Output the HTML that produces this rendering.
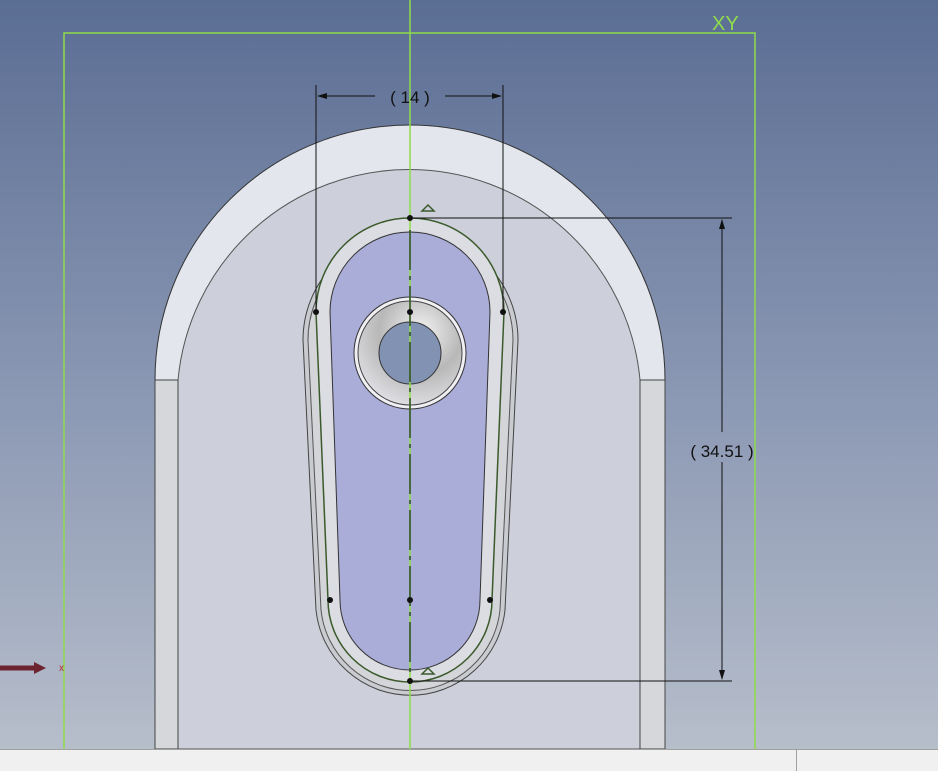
<!DOCTYPE html>
<html><head><style>body{margin:0;width:938px;height:771px;overflow:hidden}</style></head><body>
<svg width="938" height="771" xmlns="http://www.w3.org/2000/svg" font-family="Liberation Sans, sans-serif">
<defs>
<linearGradient id="bg" x1="0" y1="0" x2="0" y2="1"><stop offset="0" stop-color="#5a6d93"/><stop offset="0.5" stop-color="#8a97b3"/><stop offset="1" stop-color="#b9c0cc"/></linearGradient>
<radialGradient id="cb" cx="0.6" cy="0.3" r="0.8"><stop offset="0" stop-color="#f4f4f4"/><stop offset="0.5" stop-color="#b8b8b8"/><stop offset="1" stop-color="#e8e8ee"/></radialGradient>
</defs>
<rect width="938" height="771" fill="url(#bg)"/>
<!-- part -->
<path d="M155 749 V380 A255 255 0 0 1 665 380 V749 Z" fill="#e4e6ee" stroke="#333" stroke-width="1"/>
<path d="M178 749 V380 A232 232 0 0 1 640 380 V749 Z" fill="#cdd0da" stroke="#555" stroke-width="1"/>
<rect x="155" y="380" width="23" height="369" fill="#d6d7da" stroke="#444"/>
<rect x="640" y="380" width="25" height="369" fill="#d6d7da" stroke="#444"/>
<!-- slot outer -->
<path d="M303 340 A107 107 0 0 1 518 340 L505 610 A95 95 0 0 1 316 610 Z" fill="#c9cbd0" stroke="#444"/>
<path d="M308 340 A102 102 0 0 1 513 340 L500 610 A90 90 0 0 1 321 610 Z" fill="#d4d5d8" stroke="#555"/>
<path d="M316 312 A94 94 0 0 1 504 312 L492 600 A82 82 0 0 1 328 600 Z" fill="#dcdde2" stroke="#3b5a2c" stroke-width="1.5"/>
<path d="M330 312 A80 80 0 0 1 490 312 L480 600 A70 70 0 0 1 340 600 Z" fill="#a9add7" stroke="#333"/>
<!-- counterbore -->
<circle cx="410" cy="353" r="56" fill="#f0f0f4" stroke="#333"/>
<circle cx="410" cy="353" r="52" fill="url(#cb)" stroke="#444"/>
<circle cx="410" cy="353" r="31" fill="#8292b2" stroke="#333"/>
<!-- green frame -->
<g stroke="#8fdc4a" stroke-width="1.5" fill="none">
<path d="M64 749 V33 H755 V749"/>
<path d="M410 0 V749"/>
</g>
<path d="M410 230 V680" stroke="#2d4a22" stroke-width="1.5" stroke-dasharray="40 6 4 6"/>
<text x="712" y="30" font-size="20" fill="#8fdc4a">XY</text>
<!-- dimensions -->
<g stroke="#111" stroke-width="1" fill="none">
<path d="M316 85 V312 M503 85 V312"/>
<path d="M318 96 H375 M445 96 H501"/>
<path d="M410 218 H732 M410 681 H732"/>
<path d="M722 220 V432 M722 462 V679"/>
</g>
<g fill="#111">
<path d="M317 96 l10 -3 v6z M502 96 l-10 -3 v6z M722 219 l-3 10 h6z M722 680 l-3 -10 h6z"/>
<circle cx="410" cy="218" r="3"/><circle cx="410" cy="681" r="3"/>
<circle cx="316" cy="312" r="3"/><circle cx="410" cy="312" r="3"/><circle cx="503" cy="312" r="3"/>
<circle cx="330" cy="600" r="3"/><circle cx="410" cy="600" r="3"/><circle cx="490" cy="600" r="3"/>
</g>
<text x="410" y="103" font-size="17" text-anchor="middle" fill="#111">( 14 )</text>
<text x="722" y="457" font-size="17" text-anchor="middle" fill="#111">( 34.51 )</text>
<path d="M422 211 l6 -6 l6 6 z M422 674 l6 -6 l6 6 z" fill="none" stroke="#3b5a2c" stroke-width="1.5"/>
<!-- axis arrow -->
<path d="M0 668 H36" stroke="#6e2430" stroke-width="5"/>
<path d="M34 662 l12 6 l-12 6z" fill="#6e2430"/>
<text x="59" y="671" font-size="10" fill="#b03030">x</text>
<!-- status bar -->
<rect x="0" y="749" width="938" height="22" fill="#f0f0f0"/>
<line x1="0" y1="749.5" x2="938" y2="749.5" stroke="#a0a0a0"/>
<line x1="796.5" y1="750" x2="796.5" y2="771" stroke="#a0a0a0"/>
</svg>
</body></html>
